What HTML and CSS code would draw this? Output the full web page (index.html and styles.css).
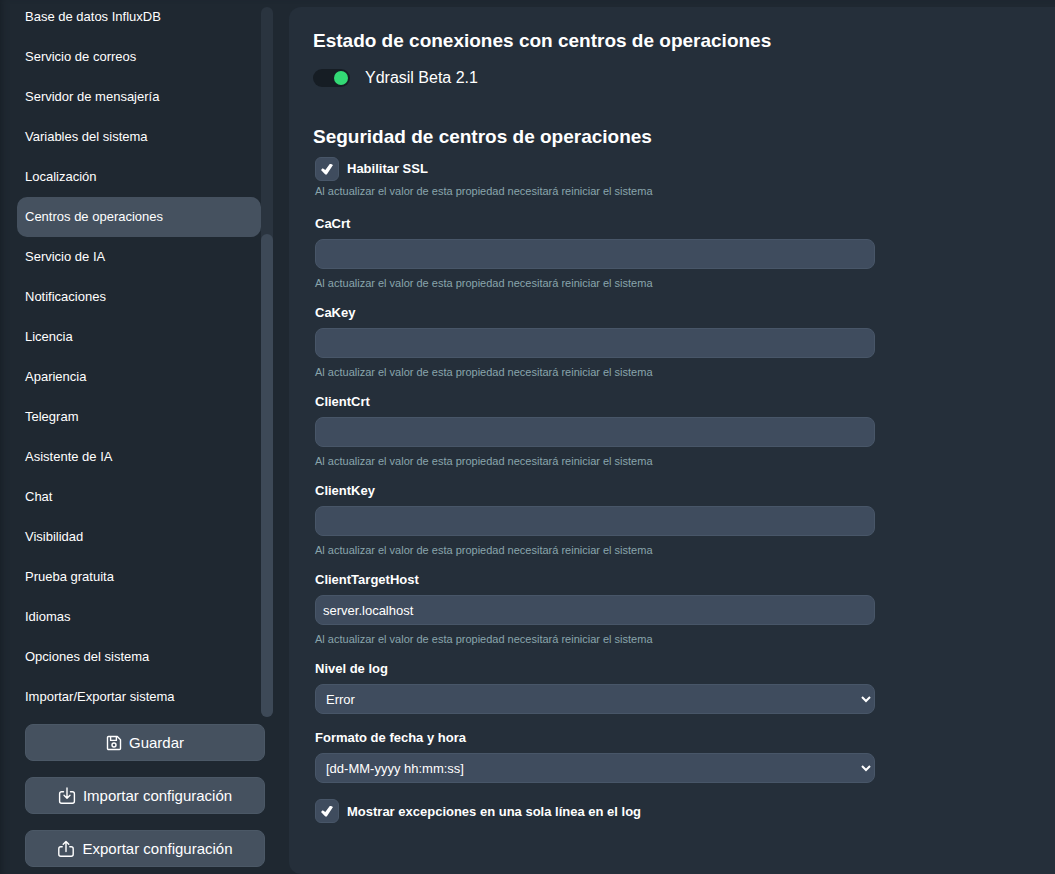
FILE: index.html
```html
<!DOCTYPE html>
<html lang="es">
<head>
    <meta charset="UTF-8">
    <meta name="viewport" content="width=device-width, initial-scale=1.0">
    <title>Centros de operaciones</title>
    <link rel="stylesheet" href="styles.css">
</head>
<body>
    <aside class="sidebar">
        <div class="menu-wrap">
            <nav class="menu">
                <a href="#">Base de datos InfluxDB</a>
                <a href="#">Servicio de correos</a>
                <a href="#">Servidor de mensajería</a>
                <a href="#">Variables del sistema</a>
                <a href="#">Localización</a>
                <a href="#" class="active">Centros de operaciones</a>
                <a href="#">Servicio de IA</a>
                <a href="#">Notificaciones</a>
                <a href="#">Licencia</a>
                <a href="#">Apariencia</a>
                <a href="#">Telegram</a>
                <a href="#">Asistente de IA</a>
                <a href="#">Chat</a>
                <a href="#">Visibilidad</a>
                <a href="#">Prueba gratuita</a>
                <a href="#">Idiomas</a>
                <a href="#">Opciones del sistema</a>
                <a href="#">Importar/Exportar sistema</a>
            </nav>
            <div class="scrollbar"><div class="thumb"></div></div>
        </div>

        <div class="actions">
            <button type="button" class="btn">
                <svg width="16" height="16" viewBox="0 0 16 16"><path d="M2.5 1.5h8.8l3.2 3.2v8.8a1 1 0 0 1-1 1h-11a1 1 0 0 1-1-1v-11a1 1 0 0 1 1-1z"/><path d="M4.6 1.8v3.6h5.8V1.8"/><circle cx="8" cy="10" r="2"/></svg>
                Guardar
            </button>
            <button type="button" class="btn">
                <svg width="18" height="18" viewBox="0 0 18 18"><path d="M5.5 4.7H3.6a2 2 0 0 0-2 2v7.6a2 2 0 0 0 2 2h10.8a2 2 0 0 0 2-2V6.7a2 2 0 0 0-2-2h-1.9"/><path d="M9 1v10M6 8.3l3 3 3-3"/></svg>
                Importar configuración
            </button>
            <button type="button" class="btn">
                <svg width="18" height="18" viewBox="0 0 18 18"><path d="M5.2 6.7H3.8a2 2 0 0 0-2 2v5.6a2 2 0 0 0 2 2h10.4a2 2 0 0 0 2-2V8.7a2 2 0 0 0-2-2h-1.4"/><path d="M9 11.5v-10M6.2 4.2L9 1.4l2.8 2.8"/></svg>
                Exportar configuración
            </button>
        </div>
    </aside>

    <main class="panel">
        <h2>Estado de conexiones con centros de operaciones</h2>
        <label class="connection">
            <input type="checkbox" class="switch" checked>
            Ydrasil Beta 2.1
        </label>

        <h2>Seguridad de centros de operaciones</h2>
        <form class="settings">
            <div class="field">
                <label class="check"><input type="checkbox" checked> Habilitar SSL</label>
                <p class="hint hint-check">Al actualizar el valor de esta propiedad necesitará reiniciar el sistema</p>
            </div>
            <div class="field">
                <label for="caCrt">CaCrt</label>
                <input type="text" id="caCrt">
                <p class="hint">Al actualizar el valor de esta propiedad necesitará reiniciar el sistema</p>
            </div>
            <div class="field">
                <label for="caKey">CaKey</label>
                <input type="text" id="caKey">
                <p class="hint">Al actualizar el valor de esta propiedad necesitará reiniciar el sistema</p>
            </div>
            <div class="field">
                <label for="clientCrt">ClientCrt</label>
                <input type="text" id="clientCrt">
                <p class="hint">Al actualizar el valor de esta propiedad necesitará reiniciar el sistema</p>
            </div>
            <div class="field">
                <label for="clientKey">ClientKey</label>
                <input type="text" id="clientKey">
                <p class="hint">Al actualizar el valor de esta propiedad necesitará reiniciar el sistema</p>
            </div>
            <div class="field">
                <label for="clientTargetHost">ClientTargetHost</label>
                <input type="text" id="clientTargetHost" value="server.localhost">
                <p class="hint">Al actualizar el valor de esta propiedad necesitará reiniciar el sistema</p>
            </div>
            <div class="field">
                <label for="logLevel">Nivel de log</label>
                <select id="logLevel"><option>Error</option></select>
            </div>
            <div class="field">
                <label for="dateFormat">Formato de fecha y hora</label>
                <select id="dateFormat"><option>[dd-MM-yyyy hh:mm:ss]</option></select>
            </div>
            <label class="check"><input type="checkbox" checked> Mostrar excepciones en una sola línea en el log</label>
        </form>
    </main>
</body>
</html>
```
FILE: styles.css
```css
* { margin: 0; padding: 0; box-sizing: border-box; font-family: "Liberation Sans", Arial, sans-serif; }
body {
    display: flex; gap: 16px; height: 100vh; overflow: hidden; padding-top: 7px;
    background: #1f2831; color: #fff; font-size: 13px;
    box-shadow: inset 6px 0 8px -6px #151c23;
}

/* Sidebar */
.sidebar { flex: none; width: 273px; padding: 0 0 7px 17px; display: flex; flex-direction: column; gap: 7px; }
.menu-wrap { flex: 1; min-height: 0; display: flex; }
.menu { flex: 1; display: flex; flex-direction: column; justify-content: flex-end; overflow: hidden; }
.menu a {
    flex: none; padding: 0 8px; line-height: 40px; border-radius: 10px;
    color: #fff; text-decoration: none;
}
.menu a.active { background: #45515f; }
.scrollbar { width: 12px; border-radius: 6px; background: #2a343f; display: flex; align-items: flex-end; }
.thumb { width: 100%; height: 68%; border-radius: 6px; background: #3d4957; }

.actions { display: flex; flex-direction: column; gap: 16px; padding: 0 8px; }
.btn {
    display: flex; align-items: center; justify-content: center; gap: 7px;
    height: 37px; border: 1px solid #4b5866; border-radius: 8px;
    background: #45515f; color: #fff; font-size: 15px; cursor: pointer;
}
.btn svg { fill: none; stroke: #fff; stroke-width: 1.4; stroke-linecap: round; stroke-linejoin: round; }

/* Content */
.panel { flex: 1; min-width: 0; padding: 22px 24px; background: #252f3a; border-radius: 12px 0 0 12px; }
h2 { font-size: 19px; line-height: 24px; font-weight: bold; }
.connection { display: flex; align-items: center; gap: 15px; margin: 13px 0 35px; line-height: 24px; font-size: 16px; }
.switch {
    appearance: none; width: 37px; height: 18px; padding: 2px; border-radius: 9px;
    background: #161d24; display: flex; justify-content: flex-end;
}
.switch::before { content: ""; width: 14px; height: 14px; border-radius: 50%; background: #33d975; }
.switch:not(:checked) { justify-content: flex-start; }

.settings { max-width: 564px; padding: 8px 2px 0; display: flex; flex-direction: column; gap: 16px; }
.field { display: flex; flex-direction: column; }
.field > label { font-weight: bold; line-height: 16px; }
.field input[type="text"], .field select {
    width: 100%; height: 30px; margin-top: 7px; padding: 0 7px;
    border: 1px solid #485668; border-radius: 8px; background-color: #3f4c5e;
    color: #fff; font-size: 13px;
}
.field select { padding: 0 6px; }
.hint { margin-top: 8px; font-size: 11px; line-height: 12px; color: #89a5ac; }
.hint-check { margin: 4px 0 3px; }

.check { display: flex; align-items: center; gap: 8px; font-weight: bold; }
.check input {
    appearance: none; width: 24px; height: 24px; border: 1px solid #485668; border-radius: 6px;
    background: #3f4c5e; display: grid; place-items: center;
}
.check input:checked::before {
    content: ""; width: 12px; height: 11px; background: #fff;
    clip-path: polygon(0 60%, 14% 43%, 36% 60%, 76% 0, 100% 14%, 48% 100%, 36% 100%);
}
```
